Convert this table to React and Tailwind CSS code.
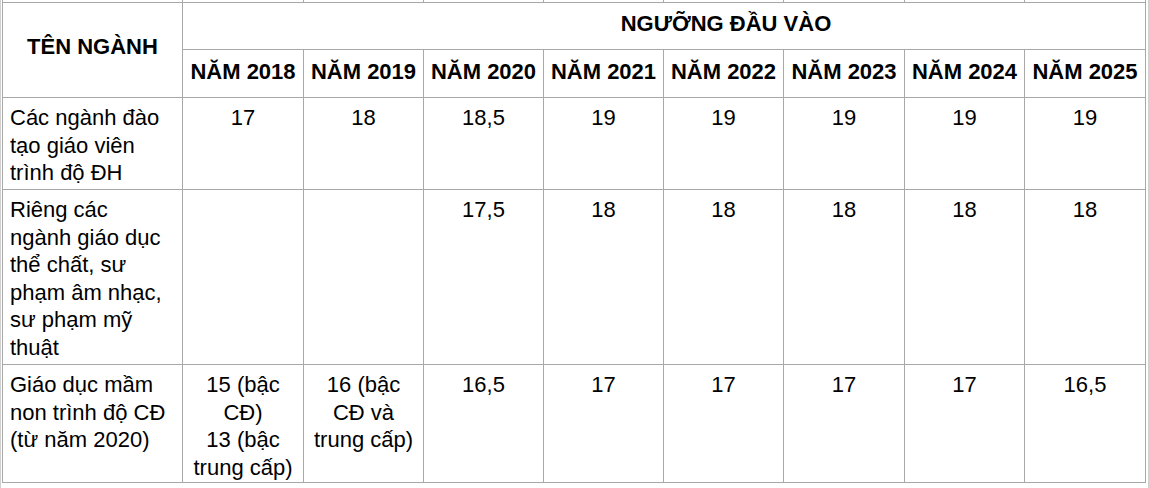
import React from "react";

const years = [2018, 2019, 2020, 2021, 2022, 2023, 2024, 2025];

const rows = [
  {
    name: ["Các ngành đào", "tạo giáo viên", "trình độ ĐH"],
    vals: [["17"], ["18"], ["18,5"], ["19"], ["19"], ["19"], ["19"], ["19"]],
    h: "h-[92px]",
  },
  {
    name: ["Riêng các", "ngành giáo dục", "thể chất, sư", "phạm âm nhạc,", "sư phạm mỹ", "thuật"],
    vals: [[], [], ["17,5"], ["18"], ["18"], ["18"], ["18"], ["18"]],
    h: "h-[175px]",
  },
  {
    name: ["Giáo dục mầm", "non trình độ CĐ", "(từ năm 2020)"],
    vals: [
      ["15 (bậc", "CĐ)", "13 (bậc", "trung cấp)"],
      ["16 (bậc", "CĐ và", "trung cấp)"],
      ["16,5"],
      ["17"],
      ["17"],
      ["17"],
      ["17"],
      ["16,5"],
    ],
    h: "h-[118px]",
  },
];

function Lines({ lines }) {
  return lines.map((l, i) => (
    <React.Fragment key={i}>
      {i > 0 && <br />}
      {l}
    </React.Fragment>
  ));
}

export default function App() {
  const cell = "border border-[#a8a8a8] p-0";
  return (
    <div
      className="w-[1149px] h-[488px] overflow-hidden bg-white text-black border-l border-r border-[#d0d0d0] px-px"
      style={{ fontFamily: '"Liberation Sans", Arial, Helvetica, sans-serif' }}
    >
      <table className="-mt-[8px] w-[1144px] table-fixed border-collapse text-[22px] leading-[27.5px]">
        <colgroup>
          <col className="w-[180px]" />
          <col className="w-[121px]" />
          <col className="w-[120px]" />
          <col className="w-[120px]" />
          <col className="w-[120px]" />
          <col className="w-[120px]" />
          <col className="w-[121px]" />
          <col className="w-[120px]" />
          <col className="w-[121px]" />
        </colgroup>
        <tbody>
          <tr className="h-[10px]">
            {Array.from({ length: 9 }).map((_, i) => (
              <td key={i} className={cell}></td>
            ))}
          </tr>
          <tr className="h-[47px]">
            <td rowSpan={2} className={`${cell} text-center align-middle font-bold pb-[6px]`}>
              TÊN NGÀNH
            </td>
            <td colSpan={8} className={`${cell} align-middle font-bold pl-[124px] pb-[4px] text-center`}>
              NGƯỠNG ĐẦU VÀO
            </td>
          </tr>
          <tr className="h-[48px]">
            {years.map((y) => (
              <td key={y} className={`${cell} text-center align-middle font-bold whitespace-nowrap pb-[4px]`}>
                NĂM {y}
              </td>
            ))}
          </tr>
          {rows.map((r, i) => (
            <tr key={i} className={r.h}>
              <td className={`${cell} align-top text-left pl-[7px] pt-[6px]`}>
                <Lines lines={r.name} />
              </td>
              {r.vals.map((v, j) => (
                <td key={j} className={`${cell} align-top text-center pt-[6px]`}>
                  <Lines lines={v} />
                </td>
              ))}
            </tr>
          ))}
        </tbody>
      </table>
    </div>
  );
}
